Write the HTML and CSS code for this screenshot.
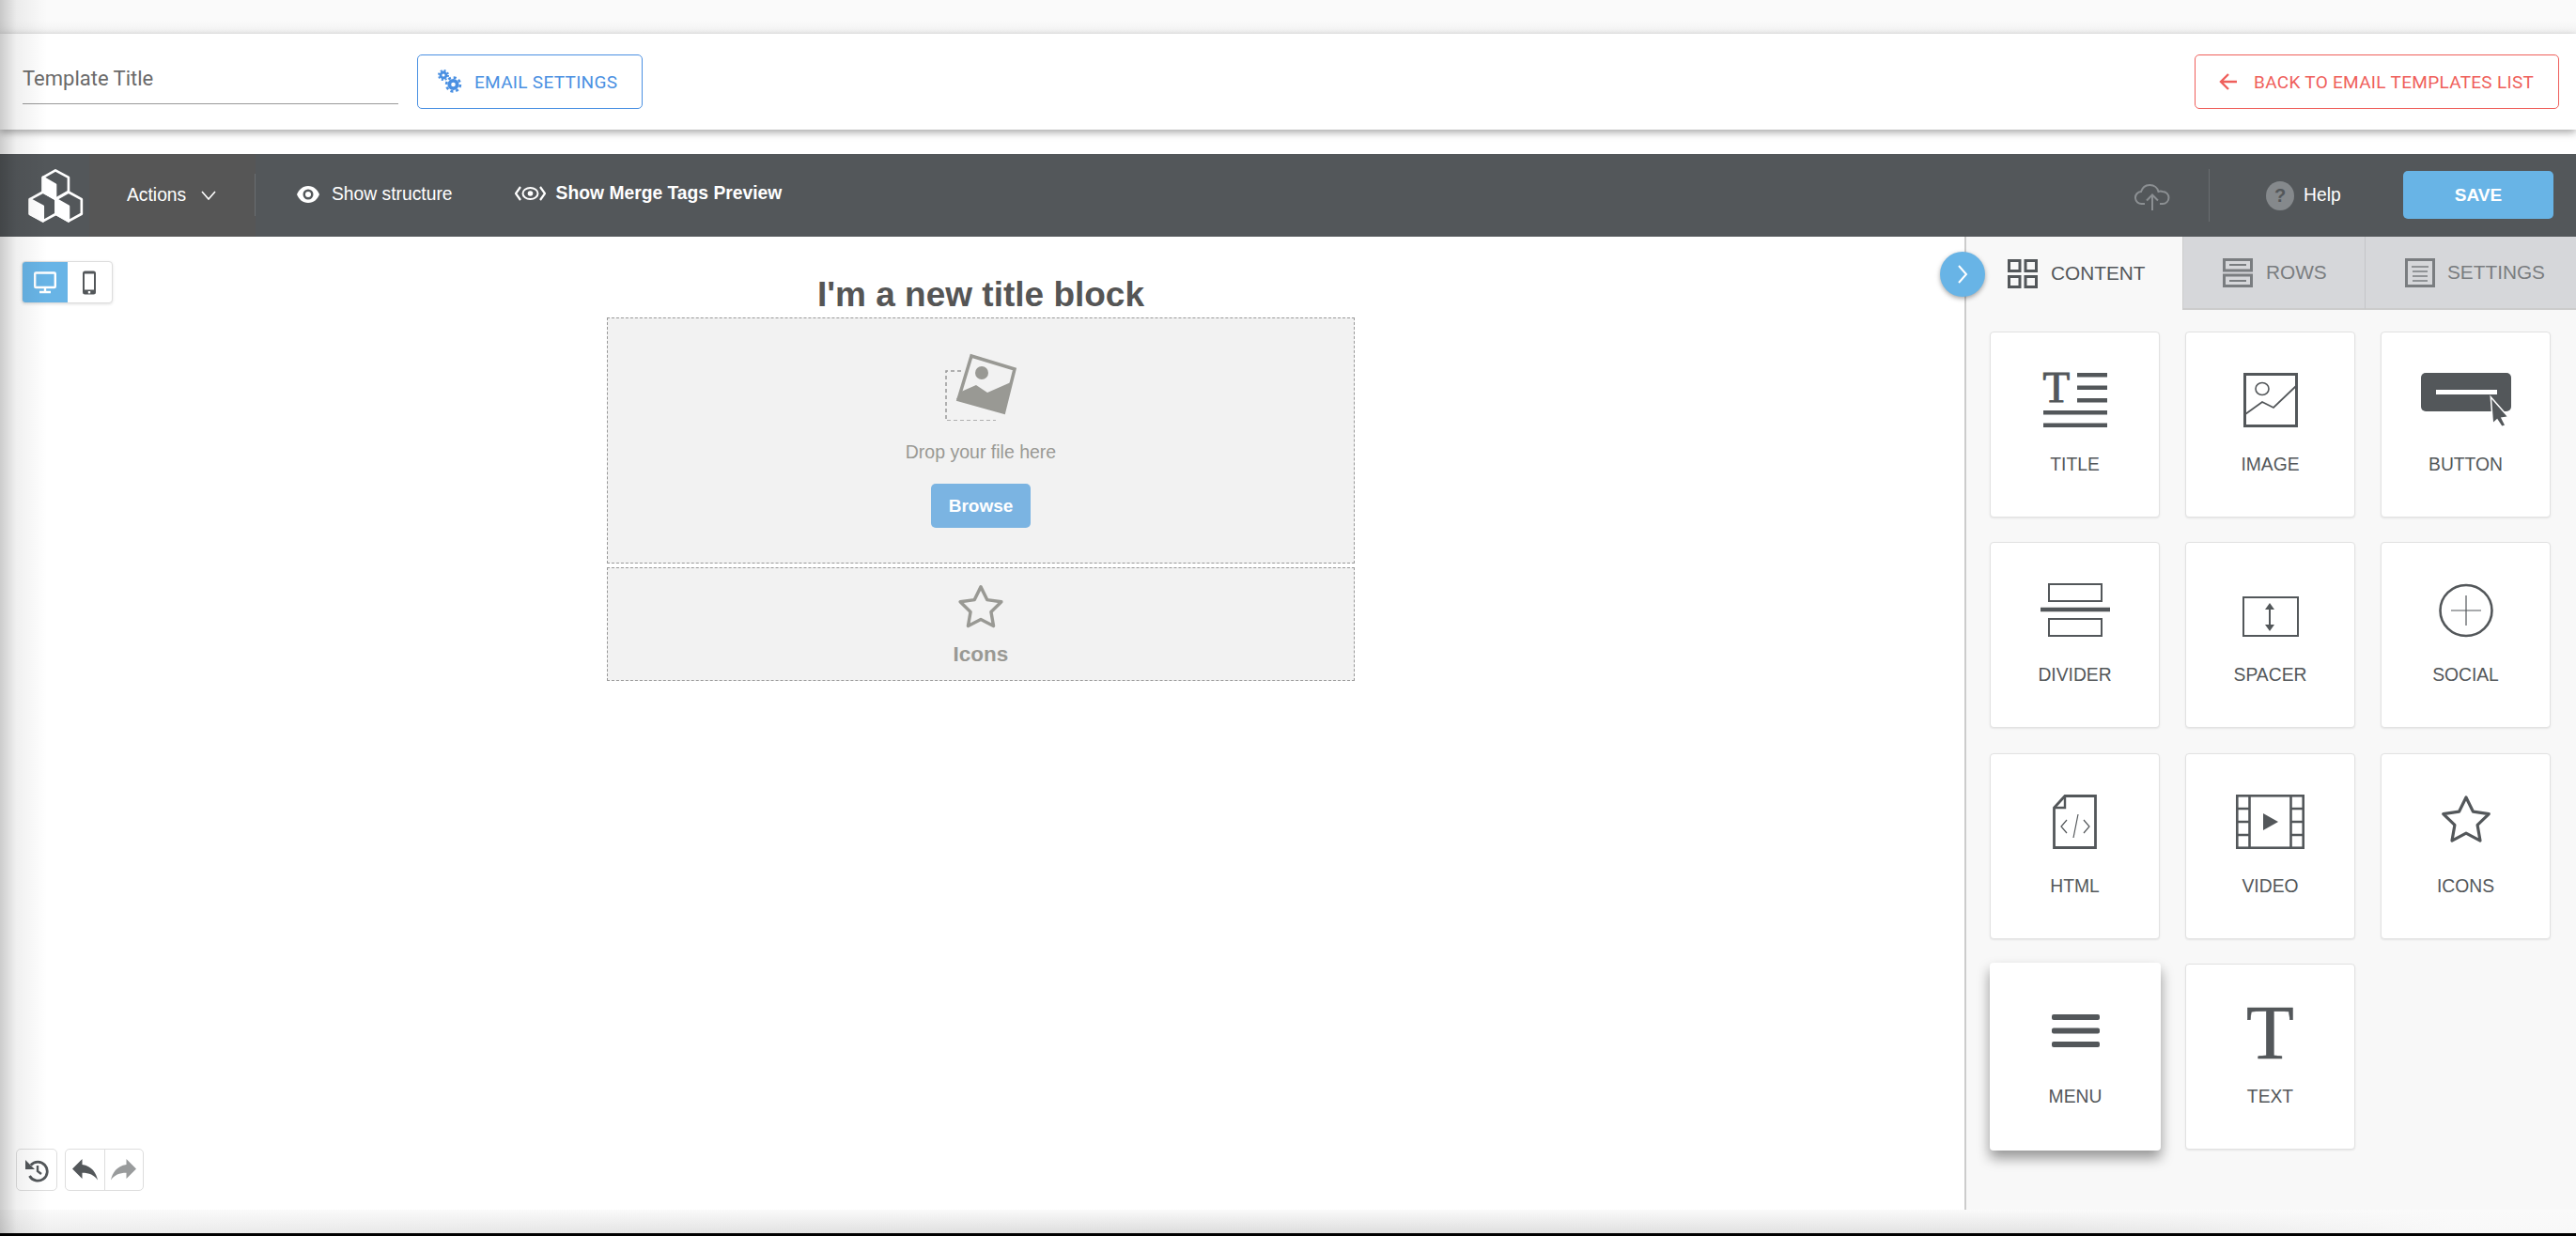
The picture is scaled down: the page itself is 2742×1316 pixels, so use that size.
FILE: index.html
```html
<!DOCTYPE html>
<html lang="en">
<head>
    <meta charset="UTF-8">
    <meta name="viewport" content="width=device-width, initial-scale=1.0">
    <title>Email Template Editor</title>
    <link rel="stylesheet" href="styles.css">
</head>
<body>

<div class="page">
    <div class="top-strip"></div>

    <div class="title-bar">
        <div class="title-input">Template Title</div>
        <button class="outline-btn settings-btn">
            <svg width="26" height="26" viewBox="0 0 26 26" fill="none" stroke="#4a90e2">
                <circle cx="6" cy="6" r="3" stroke-width="2.8"/>
                <circle cx="6" cy="6" r="5" stroke-width="2" stroke-dasharray="2 1.93"/>
                <circle cx="16.5" cy="16" r="4.2" stroke-width="3.8"/>
                <circle cx="16.5" cy="16" r="7.4" stroke-width="2.6" stroke-dasharray="3 2.81"/>
            </svg>
            EMAIL SETTINGS
        </button>
        <button class="outline-btn back-btn">
            <svg width="20" height="20" viewBox="0 0 20 20" fill="none" stroke="#ef5f5b" stroke-width="2.4">
                <path d="M19 10H2M10 2l-8 8 8 8"/>
            </svg>
            BACK TO EMAIL TEMPLATES LIST
        </button>
    </div>

    <div class="toolbar">
        <div class="logo-cell">
            <svg width="66" height="61" viewBox="20 20 190 184" fill="none" stroke="#fff" stroke-width="8" stroke-linejoin="round">
                <path d="M115 30l42 23v45l-42 24-40-24V53z"/>
                <path d="M75 100l42 23v47l-42 23-42-23v-47z"/>
                <path d="M157 100l42 23v47l-42 23-40-23v-47z"/>
                <path fill="#fff" d="M75 53l40 23v46L75 98z"/>
                <path fill="#fff" d="M33 123l42 23v47l-42-23z"/>
                <path fill="#fff" d="M117 123l40 23v47l-40-23z"/>
            </svg>
        </div>
        <div class="actions-cell">
            <span>Actions</span>
            <svg width="16" height="10" viewBox="0 0 16 10" fill="none" stroke="#fff" stroke-width="1.6">
                <path d="M1 1l7 8 7-8"/>
            </svg>
        </div>
        <div class="tool-link structure-link">
            <svg width="24" height="18" viewBox="0 0 24 18">
                <path fill="#fff" fill-rule="evenodd" d="M12 0c6 0 10 4 12 9-2 5-6 9-12 9S2 14 0 9c2-5 6-9 12-9zm0 3.500a5.500 5.500 0 1 0 0 11 5.500 5.500 0 0 0 0-11z"/>
                <circle cx="12" cy="9" r="3" fill="#fff"/>
            </svg>
            <span>Show structure</span>
        </div>
        <div class="tool-link merge-link">
            <svg width="33" height="16" viewBox="0 0 33 16" fill="none" stroke="#fff">
                <path stroke-width="2.2" d="M6 1L1 8l5 7M27 1l5 7-5 7"/>
                <ellipse cx="16.500" cy="8" rx="8" ry="6" stroke-width="2"/>
                <circle cx="16.500" cy="8" r="2.800" fill="#fff" stroke="none"/>
            </svg>
            <span>Show Merge Tags Preview</span>
        </div>

        <div class="toolbar-right">
            <svg class="cloud-icon" width="38" height="28" viewBox="0 0 38 28" fill="none" stroke="#8b8f92" stroke-width="2">
                <path d="M11 21H8a6.500 6.500 0 0 1-1-13c1.500-4.500 5-7 9.500-7 4.500 0 8 3 9 7a6.500 6.500 0 0 1 4.500 0A6.500 6.500 0 0 1 30 21h-3"/>
                <path d="M19 28V12M13 17.500l6-6 6 6"/>
            </svg>
            <div class="toolbar-sep"></div>
            <div class="help-link">
                <span class="help-badge">?</span>
                <span>Help</span>
            </div>
            <button class="save-btn">SAVE</button>
        </div>
    </div>

    <div class="editor">
        <div class="stage">
            <div class="device-toggle">
                <span class="device-cell device-active">
                    <svg width="24" height="24" viewBox="0 0 24 24" fill="none" stroke="#fff" stroke-width="2.400">
                        <rect x="1.200" y="1.500" width="21.600" height="15.500" rx="1"/>
                        <path d="M12 17v4M6 22h12"/>
                    </svg>
                </span>
                <span class="device-cell">
                    <svg width="16" height="26" viewBox="0 0 16 26">
                        <rect x="1" y="0.500" width="14" height="25" rx="2.500" fill="#53575a"/>
                        <rect x="3" y="3.500" width="10" height="17" fill="#fff"/>
                        <rect x="6.800" y="22" width="2.400" height="2.400" fill="#fff"/>
                    </svg>
                </span>
            </div>

            <div class="email-body">
                <h1 class="block-title">I'm a new title block</h1>
                <div class="drop-block image-block">
                    <svg width="77" height="72" viewBox="0 0 77 72" fill="none">
                        <path d="M17 19H1v53h53" stroke="#999" stroke-width="1.500" stroke-dasharray="4 3"/>
                        <path d="M26 0l51 15-13 51-53-15z" fill="#f2f2f2"/>
                        <path d="M28 3l46 14-11.500 46L14 49.500z" stroke="#999994" stroke-width="3.500"/>
                        <path d="M17 41l16-7 12 8 25-11-7 33-51-15z" fill="#999994"/>
                        <circle cx="39" cy="21" r="7" fill="#999994"/>
                    </svg>
                    <div class="drop-text">Drop your file here</div>
                    <button class="browse-btn">Browse</button>
                </div>
                <div class="drop-block icons-block">
                    <svg width="50" height="48" viewBox="0 0 50 50" fill="none" stroke="#999994" stroke-width="3.600" stroke-linejoin="round">
                        <path d="M25 3l7 14.300 15.800 2.300-11.400 11.100 2.700 15.700L25 39l-14.100 7.400 2.700-15.700L2.200 19.600 18 17.300z"/>
                    </svg>
                    <div class="icons-label">Icons</div>
                </div>
            </div>

            <div class="history-bar">
                <span class="history-btn">
                    <svg width="26" height="26" viewBox="0 0 26 26" fill="none" stroke="#53575a">
                        <path stroke-width="2.800" d="M6.800 7.500a10 10 0 1 1-1.300 11.500"/>
                        <path fill="#53575a" stroke="none" d="M1 2v10h10z"/>
                        <path stroke-width="2.400" d="M14 8v6l4 3"/>
                    </svg>
                </span>
                <span class="undo-group">
                    <span class="undo-cell">
                        <svg width="27" height="25" viewBox="3 5 18 15.500"><path fill="#53575a" d="M10 9V5l-7 7 7 7v-4.100c5 0 8.500 1.600 11 5.100-1-5-4-10-11-11z"/></svg>
                    </span>
                    <span class="undo-cell">
                        <svg width="27" height="25" viewBox="3 5 18 15.500"><path fill="#999b9c" d="M14 9V5l7 7-7 7v-4.100c-5 0-8.500 1.600-11 5.100 1-5 4-10 11-11z"/></svg>
                    </span>
                </span>
            </div>
        </div>

        <div class="sidebar">
            <button class="collapse-btn">
                <svg width="12" height="22" viewBox="0 0 12 22" fill="none" stroke="#fff" stroke-width="2"><path d="M2 2l8 9-8 9"/></svg>
            </button>

            <div class="tabs">
                <div class="tab tab-active tab-content">
                    <svg width="32" height="31" viewBox="0 0 32 31" fill="none" stroke="#53575a" stroke-width="3">
                        <rect x="1.500" y="1.500" width="11.500" height="11"/><rect x="19" y="1.500" width="11.500" height="11"/>
                        <rect x="1.500" y="18.500" width="11.500" height="11"/><rect x="19" y="18.500" width="11.500" height="11"/>
                    </svg>
                    CONTENT
                </div>
                <div class="tab tab-rows">
                    <svg width="32" height="31" viewBox="0 0 32 31" fill="none" stroke="#7a7d80" stroke-width="3">
                        <rect x="1.500" y="1.500" width="29" height="11.500"/><rect x="1.500" y="18" width="29" height="11.500"/>
                        <path stroke-width="2" d="M7 7h18M7 24h18"/>
                    </svg>
                    ROWS
                </div>
                <div class="tab tab-settings">
                    <svg width="32" height="31" viewBox="0 0 32 31" fill="none" stroke="#7a7d80">
                        <rect x="1.500" y="1.500" width="29" height="28" stroke-width="3"/>
                        <path stroke-width="1.600" d="M7 9h18M8 14h16M8 19h16M8 24h16"/>
                    </svg>
                    SETTINGS
                </div>
            </div>

            <div class="blocks">
                <div class="block-card">
                    <svg class="block-icon" width="68" height="58" viewBox="0 0 68 58">
                        <text class="serif-t serif-t-small" x="-0.500" y="31" font-size="47">T</text>
                        <path fill="#53575a" d="M36 0h32v4.500H36zM36 13.500h32V18H36zM36 27h32v4.500H36zM0 40h68v4.500H0zM0 53.500h68V58H0z"/>
                    </svg>
                    <span class="block-name">TITLE</span>
                </div>
                <div class="block-card">
                    <svg class="block-icon" width="58" height="58" viewBox="0 0 58 58" fill="none" stroke="#53575a">
                        <rect x="1.500" y="1.500" width="55" height="55" stroke-width="3"/>
                        <ellipse cx="20" cy="17" rx="7" ry="6.500" stroke-width="1.600"/>
                        <path stroke-width="1.800" d="M2 44l18-13 12 6 24-23"/>
                    </svg>
                    <span class="block-name">IMAGE</span>
                </div>
                <div class="block-card">
                    <svg class="block-icon" width="96" height="58" viewBox="0 0 96 58">
                        <rect x="0" y="0" width="96" height="41" rx="5" fill="#53575a"/>
                        <rect x="16" y="18" width="65" height="5" fill="#fff"/>
                        <path fill="#53575a" stroke="#fff" stroke-width="1.500" d="M74.300 25.700L93 47l-7 1 4 8-4 1.500-5-7.500-4.600 4z"/>
                    </svg>
                    <span class="block-name">BUTTON</span>
                </div>
                <div class="block-card">
                    <svg class="block-icon" width="74" height="58" viewBox="0 0 74 58" fill="none" stroke="#53575a">
                        <rect x="9" y="1" width="56" height="18" stroke-width="2"/>
                        <rect x="9" y="38" width="56" height="18" stroke-width="2"/>
                        <path stroke-width="4.500" d="M0 28h74"/>
                    </svg>
                    <span class="block-name">DIVIDER</span>
                </div>
                <div class="block-card">
                    <svg class="block-icon" width="60" height="58" viewBox="0 0 60 58" fill="none" stroke="#53575a">
                        <rect x="1" y="15" width="58" height="41" stroke-width="2"/>
                        <path stroke-width="2" d="M29 24v22"/>
                        <path fill="#53575a" stroke="none" d="M29 21l5 7H24zM29 51l-5-7h10z"/>
                    </svg>
                    <span class="block-name">SPACER</span>
                </div>
                <div class="block-card">
                    <svg class="block-icon" width="58" height="58" viewBox="0 0 58 58" fill="none" stroke="#53575a">
                        <ellipse cx="29" cy="29" rx="27.500" ry="27" stroke-width="2.600"/>
                        <path stroke-width="1.200" d="M13 29h32M29 13v32"/>
                    </svg>
                    <span class="block-name">SOCIAL</span>
                </div>
                <div class="block-card">
                    <svg class="block-icon" width="47" height="58" viewBox="0 0 47 58" fill="none" stroke="#53575a">
                        <path stroke-width="2.800" d="M13 1.500h32.500v55h-44V14z"/>
                        <path stroke-width="2.400" d="M13 1.500V14H1.500"/>
                        <path stroke-width="1.200" d="M15 27l-6 7 6 7M33 27l6 7-6 7M27 21l-5 25"/>
                    </svg>
                    <span class="block-name">HTML</span>
                </div>
                <div class="block-card">
                    <svg class="block-icon" width="73" height="58" viewBox="0 0 73 58" fill="none" stroke="#53575a" stroke-width="2.600">
                        <rect x="1.300" y="1.300" width="70.400" height="55.400"/>
                        <path d="M14.500 1v56M58.500 1v56M1 15h13M1 29h13M1 43h13M59 15h13M59 29h13M59 43h13"/>
                        <path fill="#53575a" stroke="none" d="M29 20l16 9-16 9z"/>
                    </svg>
                    <span class="block-name">VIDEO</span>
                </div>
                <div class="block-card">
                    <svg class="block-icon" width="52" height="58" viewBox="0 0 52 58" fill="none" stroke="#53575a" stroke-width="3.200" stroke-linejoin="round">
                        <path d="M26 3l7.500 15.200 16.800 2.400-12.200 11.800 2.900 16.700L26 41.200l-15 7.900 2.900-16.700L1.700 20.600l16.800-2.400z"/>
                    </svg>
                    <span class="block-name">ICONS</span>
                </div>
                <div class="block-card block-card-hover">
                    <svg class="block-icon" width="51" height="58" viewBox="0 0 51 58" fill="#53575a">
                        <rect x="0" y="10" width="51" height="6" rx="2"/>
                        <rect x="0" y="24.500" width="51" height="6" rx="2"/>
                        <rect x="0" y="39" width="51" height="6" rx="2"/>
                    </svg>
                    <span class="block-name">MENU</span>
                </div>
                <div class="block-card">
                    <svg class="block-icon" width="51" height="58" viewBox="0 0 51 58">
                        <text class="serif-t serif-t-large" x="0" y="57" font-size="83">T</text>
                    </svg>
                    <span class="block-name">TEXT</span>
                </div>
            </div>
        </div>
    </div>

    <div class="bottom-fade"></div>
    <div class="left-shade"></div>
</div>

</body>
</html>
```

FILE: styles.css
```css
* {
    box-sizing: border-box;
}

body {
    margin: 0;
    font-family: "Liberation Sans", Arial, sans-serif;
    background: #fff;
}

button {
    font-family: inherit;
    cursor: pointer;
}

.page {
    position: relative;
    display: flex;
    flex-direction: column;
    height: 100vh;
    overflow: hidden;
}

.top-strip {
    height: 36px;
    flex: none;
    background: linear-gradient(#fafafa 60%, #f2f2f2);
}

.title-bar {
    position: relative;
    z-index: 2;
    display: flex;
    align-items: center;
    flex: none;
    height: 102px;
    margin-bottom: 26px;
    padding: 0 18px 0 24px;
    background: #fff;
    box-shadow: 0 3px 8px rgba(0, 0, 0, 0.35);
}

.title-input {
    align-self: flex-start;
    width: 400px;
    height: 75px;
    padding-top: 35px;
    border-bottom: 1px solid #999;
    font-family: Roboto, sans-serif;
    font-size: 22px;
    line-height: 26px;
    color: #6a6a6a;
}

.outline-btn {
    display: flex;
    align-items: center;
    height: 58px;
    background: #fff;
    border-radius: 5px;
    font-family: Roboto, sans-serif;
    font-size: 19px;
    letter-spacing: 0.3px;
}

.settings-btn {
    width: 240px;
    margin-left: 20px;
    padding: 0 0 0 21px;
    gap: 13px;
    border: 1px solid #4a90e2;
    color: #4a90e2;
}

.back-btn {
    width: 388px;
    margin-left: auto;
    padding: 0 0 0 25px;
    gap: 17px;
    border: 1px solid #ef5f5b;
    color: #ef5f5b;
}

.toolbar {
    display: flex;
    align-items: center;
    flex: none;
    height: 88px;
    background: #53575a;
    color: #fff;
    font-size: 19.3px;
}

.logo-cell {
    display: flex;
    align-items: center;
    width: 95px;
    height: 100%;
    padding-left: 26px;
}

.actions-cell {
    position: relative;
    display: flex;
    align-items: center;
    gap: 16px;
    width: 177px;
    height: 100%;
    padding-left: 40px;
    background: #565656;
}

.actions-cell::after {
    content: "";
    position: absolute;
    right: 0;
    top: 21px;
    height: 45px;
    border-right: 1px solid #6a6d70;
}

.tool-link {
    display: flex;
    align-items: center;
}

.structure-link {
    gap: 13px;
    margin-left: 44px;
    margin-bottom: 2px;
}

.merge-link {
    gap: 11px;
    margin-left: 66px;
    margin-bottom: 5px;
    font-weight: bold;
}

.toolbar-right {
    display: flex;
    align-items: center;
    margin-left: auto;
    padding-right: 24px;
}

.cloud-icon {
    margin-top: 3px;
}

.toolbar-sep {
    width: 1px;
    height: 56px;
    margin: 0 60px 0 41px;
    background: #6a6d70;
}

.help-link {
    display: flex;
    align-items: center;
    gap: 10px;
    width: 146px;
}

.help-badge {
    display: flex;
    align-items: center;
    justify-content: center;
    width: 30px;
    height: 31px;
    border-radius: 50%;
    background: #85898c;
    color: #53575a;
    font-weight: bold;
    font-size: 20px;
}

.save-btn {
    width: 160px;
    height: 51px;
    margin-top: -1px;
    border: none;
    border-radius: 5px;
    background: #68b4e6;
    color: #fff;
    font-size: 19px;
    font-weight: bold;
}

.editor {
    display: flex;
    flex: 1;
    min-height: 0;
}

.stage {
    position: relative;
    flex: 1;
    background: #fff;
}

.device-toggle {
    position: absolute;
    left: 23px;
    top: 26px;
    display: flex;
    width: 97px;
    height: 45px;
    background: #fff;
    border: 1px solid #ddd;
    border-radius: 4px;
    box-shadow: 0 1px 3px rgba(0, 0, 0, 0.12);
    overflow: hidden;
}

.device-cell {
    display: flex;
    align-items: center;
    justify-content: center;
    flex: 1;
}

.device-active {
    background: #68b4e6;
}

.email-body {
    display: flex;
    flex-direction: column;
    width: 796px;
    margin: 0 0 0 646px;
}

.block-title {
    height: 86px;
    margin: 0;
    padding-top: 42px;
    font-size: 37px;
    line-height: 40px;
    font-weight: bold;
    text-align: center;
    color: #555;
}

.drop-block {
    display: flex;
    flex-direction: column;
    align-items: center;
    background: #f2f2f2;
    border: 1px dashed #999;
}

.image-block {
    height: 262px;
    padding-top: 37px;
}

.icons-block {
    height: 121px;
    margin-top: 4px;
    padding-top: 17px;
}

.drop-text {
    margin-top: 22px;
    font-size: 19.5px;
    line-height: 22px;
    color: #999994;
}

.browse-btn {
    width: 106px;
    height: 47px;
    margin-top: 23px;
    border: none;
    border-radius: 5px;
    background: #7bb4e2;
    color: #fff;
    font-size: 19px;
    font-weight: bold;
}

.icons-label {
    margin-top: 14px;
    font-size: 22.5px;
    line-height: 26px;
    font-weight: bold;
    color: #999994;
}

.history-bar {
    position: absolute;
    left: 17px;
    top: 971px;
    display: flex;
    gap: 8px;
}

.history-btn,
.undo-group {
    display: flex;
    height: 45px;
    background: #fff;
    border: 1px solid #ddd;
    border-radius: 5px;
}

.history-btn {
    align-items: center;
    justify-content: center;
    width: 44px;
}

.undo-group {
    width: 84px;
}

.undo-cell {
    display: flex;
    align-items: center;
    justify-content: center;
    flex: 1;
}

.undo-cell + .undo-cell {
    border-left: 1px solid #ddd;
}

.sidebar {
    position: relative;
    flex: none;
    display: flex;
    flex-direction: column;
    width: 651px;
    background: #f8f8f8;
    border-left: 2px solid #ccc;
}

.collapse-btn {
    position: absolute;
    left: -28px;
    top: 16px;
    z-index: 1;
    display: flex;
    align-items: center;
    justify-content: center;
    width: 48px;
    height: 48px;
    padding: 0;
    border: none;
    border-radius: 50%;
    background: #68b4e6;
    box-shadow: 0 2px 5px rgba(0, 0, 0, 0.35);
}

.tabs {
    display: flex;
    flex: none;
    height: 78px;
    font-size: 20.8px;
}

.tab {
    display: flex;
    align-items: center;
    height: 78px;
    gap: 14px;
    color: #7a7d80;
    background: #d6d7da;
    border-bottom: 2px solid #ccc;
}

.tab-active {
    color: #53575a;
    background: #f8f8f8;
    border-bottom: none;
    border-right: 1px solid #ccc;
}

.tab-content {
    width: 231px;
    padding-left: 44px;
}

.tab-rows {
    width: 194px;
    padding-left: 42px;
    border-right: 1px solid #c4c5c8;
}

.tab-settings {
    flex: 1;
    padding-left: 42px;
    gap: 13px;
}

.blocks {
    display: grid;
    grid-template-columns: repeat(3, 181px);
    grid-auto-rows: 198px;
    column-gap: 27px;
    row-gap: 26.4px;
    padding: 23px 0 0 25px;
}

.block-card {
    display: flex;
    flex-direction: column;
    align-items: center;
    padding-top: 43px;
    background: #fff;
    border: 1px solid #e2e2e2;
    border-radius: 4px;
    box-shadow: 0 1px 2px rgba(0, 0, 0, 0.08);
}

.block-card-hover {
    margin: -1px -1px -1px 0;
    padding-top: 45px;
    border: none;
    box-shadow: 0 8px 14px rgba(0, 0, 0, 0.4);
}

.block-icon {
    flex: none;
    overflow: visible;
}

.block-name {
    margin-top: 28px;
    font-size: 19.3px;
    line-height: 24px;
    color: #53575a;
}

.serif-t {
    font-family: "Liberation Serif", serif;
    fill: #53575a;
    stroke: #53575a;
}

.serif-t-small {
    stroke-width: 1;
}

.serif-t-large {
    stroke-width: 0.6;
}

.bottom-fade {
    flex: none;
    height: 28px;
    border-bottom: 3px solid #000;
    background:
        linear-gradient(#fafafa, rgba(250, 250, 250, 0)),
        linear-gradient(to right, #eee, #dcdcdc 45%, #e4e4e4 80%, #f8f8f8 95%);
}

.left-shade {
    position: absolute;
    left: 0;
    top: 0;
    bottom: 0;
    z-index: 3;
    width: 50px;
    background: linear-gradient(to right, rgba(0, 0, 0, 0.2), rgba(0, 0, 0, 0.06) 35%, transparent);
    pointer-events: none;
}
```
